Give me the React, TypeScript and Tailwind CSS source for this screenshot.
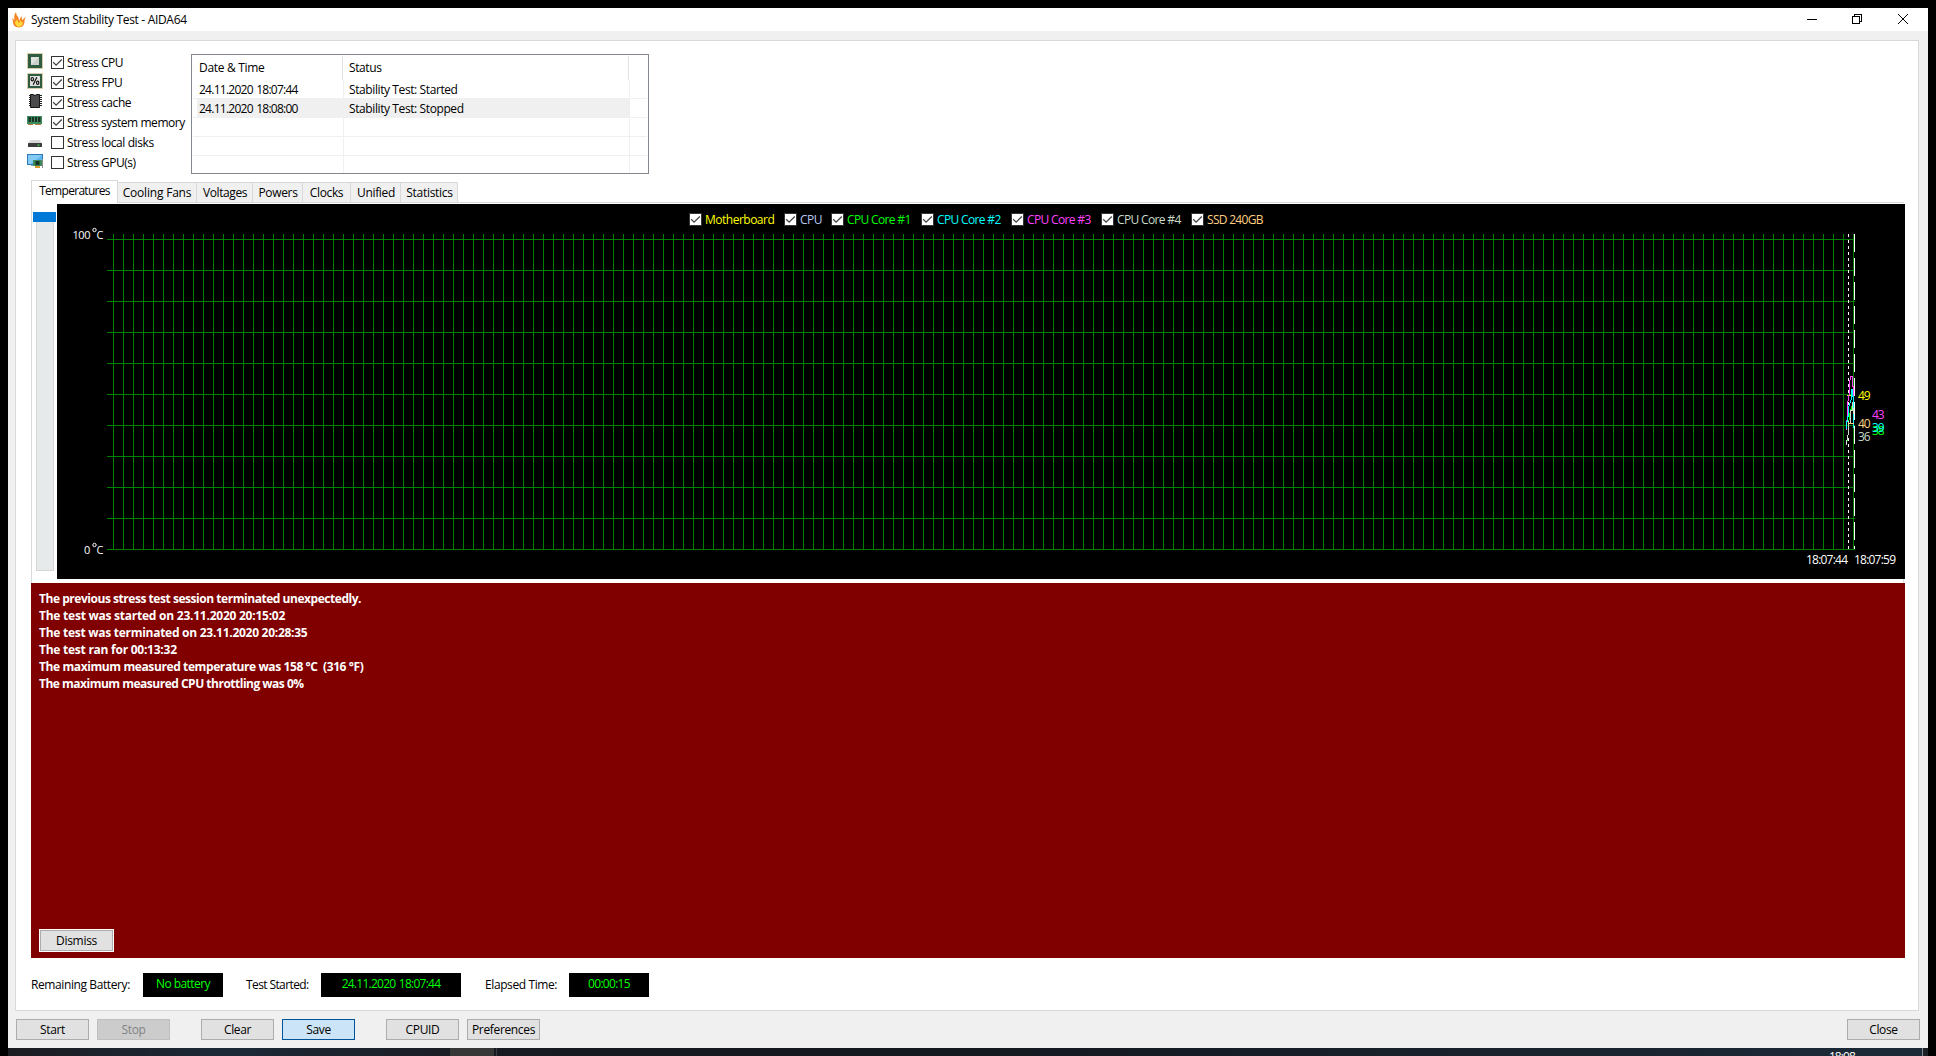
import React from "react";

function Check({ checked, className = "" }: { checked: boolean; className?: string }) {
  return (
    <span className={`block size-[13px] shrink-0 border border-[#333] bg-white ${className}`}>
      {checked && (
        <svg viewBox="0 0 11 11" className="block size-[11px]" fill="none" stroke="#444" strokeWidth="1.3">
          <path d="M1.2 5.3 L4.1 8.2 L9.8 2.5" />
        </svg>
      )}
    </span>
  );
}

function Pins() {
  return <rect x="0.5" y="0.5" width="15" height="15" fill="none" stroke="#b39a54" strokeDasharray="1 1" />;
}

const icons: Record<string, React.ReactNode> = {
  cpu: (
    <>
      <Pins />
      <rect x="1" y="1" width="14" height="14" fill="#2e5b41" />
      <rect x="4" y="4" width="8" height="8" fill="#e0e3e0" />
      <path d="M4 12L12 4V12Z" fill="#cbcfcc" />
    </>
  ),
  fpu: (
    <>
      <Pins />
      <rect x="1" y="1" width="14" height="14" fill="#2e5b41" />
      <rect x="3" y="3" width="10" height="10" fill="#dfe2df" />
      <g fill="none" stroke="#111" strokeWidth="1.2">
        <ellipse cx="5.300" cy="6.200" rx="1.200" ry="1.700" />
        <ellipse cx="10.700" cy="9.800" rx="1.200" ry="1.700" />
        <path d="M9.800 4.200L6.200 11.800" />
      </g>
    </>
  ),
  cache: (
    <>
      <path d="M1.500 2.500H14.500M1.500 4.500H14.500M1.500 6.500H14.500M1.500 8.500H14.500M1.500 10.500H14.500M1.500 12.500H14.500" stroke="#222" shapeRendering="crispEdges" />
      <path d="M3.500 1.500H6Q8 3.500 10 1.500H12.500V14.500H3.500Z" fill="#4a4a4c" stroke="#151515" />
    </>
  ),
  memory: (
    <>
      <path d="M0 3H15V11H0Z" fill="#3d8a5d" />
      <path d="M1.500 4H4V9H1.500ZM5 4H7V9H5ZM8 4H10V9H8ZM11 4H13.500V9H11Z" fill="#1b3427" />
      <path d="M1 11.500H6M8 11.500H14" stroke="#b9793c" />
    </>
  ),
  disk: (
    <>
      <path d="M3.500 7H12.500L15 10.500H1Z" fill="#d7d7d7" />
      <rect x="1" y="10" width="14" height="4" rx="0.500" fill="#3c3c3c" />
      <rect x="10.500" y="11.500" width="2" height="1.200" fill="#41e05a" />
    </>
  ),
  gpu: (
    <>
      <rect x="0.500" y="1.500" width="15" height="10" fill="#5cb6ee" stroke="#2d78b5" />
      <path d="M1 2H15L4 11H1Z" fill="#83cbf5" />
      <rect x="4" y="12" width="4" height="1" fill="#9aa7b0" />
      <path d="M6 7H15V13H6Z" fill="#3f8a5c" />
      <rect x="8.500" y="8" width="4" height="4" fill="#143523" />
      <path d="M8 14H13" stroke="#d99a2b" strokeWidth="2" />
      <path d="M15.500 6V15" stroke="#8d8d8d" />
    </>
  ),
};

const stress = [
  { icon: "cpu", label: "Stress CPU", on: true, t: "tracking-[-0.45px]" },
  { icon: "fpu", label: "Stress FPU", on: true, t: "tracking-[-0.38px]" },
  { icon: "cache", label: "Stress cache", on: true, t: "tracking-[-0.43px]" },
  { icon: "memory", label: "Stress system memory", on: true, t: "tracking-[-0.45px]" },
  { icon: "disk", label: "Stress local disks", on: false, t: "tracking-[-0.4px]" },
  { icon: "gpu", label: "Stress GPU(s)", on: false, t: "tracking-[-0.45px]" },
];

function TitleBar() {
  return (
    <header className="flex h-[23px] shrink-0 items-center bg-white">
      <svg viewBox="0 0 14 16" className="ml-1 h-4 w-[14px]">
        <path d="M0 6Q2 7 3 9Q1 4 4 0Q4 3 6 5Q7 6 7 9Q8 6 10 4Q9.500 7 10.500 8Q12 6 14 5Q12 8 12.500 10Q12 15 7 15.500Q1 15 1 10Q1 8 0 6Z" fill="#f58220" />
        <path d="M3 10Q4 10 5 7Q6 10 7 11Q8 9 9 8Q9 11 11 10Q11 14 7 15Q3 14 3 10Z" fill="#ffd93b" />
      </svg>
      <h1 className="ml-[5px] text-[12px] leading-[15px] tracking-[-0.32px] whitespace-nowrap">System Stability Test - AIDA64</h1>
      <svg viewBox="0 0 110 12" className="mt-[-1px] mr-[18px] ml-auto h-3 w-[110px]" fill="none" stroke="#000" shapeRendering="crispEdges">
        <path d="M7 6.500H17" />
        <path d="M52.500 3.500H59.500V10.500H52.500ZM54.500 3.500V1.500H61.500V8.500H59.500" />
        <path d="M98 1L108 11M108 1L98 11" shapeRendering="auto" />
      </svg>
    </header>
  );
}

const log = [
  ["24.11.2020 18:07:44", "Stability Test: Started"],
  ["24.11.2020 18:08:00", "Stability Test: Stopped"],
  ["", ""],
  ["", ""],
  ["", ""],
];

function EventLog() {
  return (
    <section className="ml-[6px] h-[120px] w-[458px] border border-[#828790] bg-white px-px pt-px text-[12px] leading-[15px] tracking-[-0.4px] whitespace-nowrap">
      <div className="flex h-6">
        <div className="h-6 w-[150px] border-r border-[#e2e2e2] pt-[4px] pl-[6px] tracking-[-0.3px]">Date &amp; Time</div>
        <div className="h-6 w-[286px] border-r border-[#e2e2e2] pt-[4px] pl-[6px]">Status</div>
      </div>
      {log.map(([time, status], i) => (
        <div key={i} className={`flex ${i === 4 ? "h-[17px]" : "h-[19px] border-b border-[#f0f0f0]"}`}>
          <div className={`ml-1 w-[147px] border-r border-[#f0f0f0] pt-[2px] pl-[2px] tracking-[-0.74px] [word-spacing:1px] ${i === 1 ? "bg-[#f0f0f0]" : ""}`}>{time}</div>
          <div className={`w-[286px] border-r border-[#f0f0f0] pt-[2px] pl-[5px] ${i === 1 ? "bg-[#f0f0f0]" : ""}`}>{status}</div>
        </div>
      ))}
    </section>
  );
}

const tabs = [
  ["Cooling Fans", "w-[79px] tracking-[-0.2px]"],
  ["Voltages", "w-[56px] pl-px tracking-[-0.4px]"],
  ["Powers", "w-[50px] pl-px tracking-[-0.35px]"],
  ["Clocks", "w-[48px] tracking-[-0.35px]"],
  ["Unified", "w-[50px] pl-px tracking-[-0.35px]"],
  ["Statistics", "w-[57px] pl-px tracking-[-0.3px]"],
];

function Tabs() {
  return (
    <nav className="flex h-[23px] w-[1873px] items-end text-[12px] leading-[15px] whitespace-nowrap">
      <div className="h-[23px] w-[87px] border-x border-t border-[#d9d9d9] bg-white pt-[2px] text-center tracking-[-0.7px]">Temperatures</div>
      {tabs.map(([label, w]) => (
        <div key={label} className={`h-[21px] border-t border-r border-b border-[#d9d9d9] bg-[#f0f0f0] pt-[2px] text-center ${w}`}>
          {label}
        </div>
      ))}
      <div className="h-px flex-1 bg-[#d9d9d9]" />
    </nav>
  );
}

const sensors = [
  ["Motherboard", "text-[#ffff00]", "w-[95px] tracking-[-0.5px]"],
  ["CPU", "text-[#b8c8f0]", "w-[47px] tracking-[-0.5px]"],
  ["CPU Core #1", "text-[#00ff00]", "w-[90px] tracking-[-0.65px]"],
  ["CPU Core #2", "text-[#00ffff]", "w-[90px] tracking-[-0.65px]"],
  ["CPU Core #3", "text-[#ff40ff]", "w-[90px] tracking-[-0.65px]"],
  ["CPU Core #4", "text-[#c8dcc8]", "w-[90px] tracking-[-0.65px]"],
  ["SSD 240GB", "text-[#ffd080]", "w-[76px] tracking-[-0.7px]"],
];

function Chart() {
  const cols = Array.from({ length: 175 }, (_, i) => 56.5 + i * 10);
  const rows = Array.from({ length: 11 }, (_, i) => 35.5 + i * 31);
  return (
    <div className="h-[375px] w-[1848px] bg-black">
      <div className="flex h-[30px] items-center pt-px pl-[632px] text-[12px] leading-[15px] whitespace-nowrap">
        {sensors.map(([label, color, w]) => (
          <div key={label} className={`flex shrink-0 items-center gap-[3px] ${color} ${w}`}>
            <Check checked />
            {label}
          </div>
        ))}
      </div>
      <svg viewBox="0 30 1848 345" className="block h-[345px] w-[1848px] overflow-visible">
        <g stroke="#008000" fill="none" shapeRendering="crispEdges">
          {cols.map((x) => (
            <path key={x} d={`M${x} 30V345`} />
          ))}
          {rows.map((y) => (
            <path key={y} d={`M50 ${y}H1798`} />
          ))}
        </g>
        <g fill="none" shapeRendering="crispEdges">
          <path d="M1791.500 30V345" stroke="#fff" strokeDasharray="3 3" />
          <path d="M1797.500 30V345" stroke="#fff" strokeDasharray="18 6" />
          <path d="M1790 191.500H1794" stroke="#ffff00" />
          <path d="M1789.500 226V216H1790.500V200L1792.500 188V180L1793.500 172.500H1795.500V182H1796.500V200" stroke="#ff40ff" />
          <path d="M1789.500 225V220L1791.500 210V203L1794.500 195V185H1795.500V192H1796.500V224" stroke="#00ffff" />
          <path d="M1789.500 240L1791.500 228V220L1793.500 205V208L1795.500 200" stroke="#00ff00" />
          <path d="M1789.500 241V238L1791.500 229V217M1793.500 219V206H1795.500V198L1796.500 210" stroke="#c8dcc8" />
          <path d="M1791 219.500H1797" stroke="#ffd080" />
        </g>
        <g fontFamily="Open Sans, Noto Sans, sans-serif" fontSize="12">
          <g fill="#fff">
            <text x="15.500" y="35" fontSize="11" textLength="18">100</text>
            <circle cx="37.500" cy="26" r="1.700" fill="none" stroke="#fff" />
            <text x="39.500" y="35" fontSize="11">C</text>
            <text x="27" y="350" fontSize="11">0</text>
            <circle cx="37.500" cy="341" r="1.700" fill="none" stroke="#fff" />
            <text x="39.500" y="350" fontSize="11">C</text>
            <text x="1749" y="360" textLength="42">18:07:44</text>
            <text x="1797" y="360" textLength="42">18:07:59</text>
          </g>
          <text x="1801" y="196" fill="#ffff00" textLength="12.500">49</text>
          <text x="1815" y="215" fill="#ff40ff" textLength="12.500">43</text>
          <text x="1801" y="224" fill="#ffd080" textLength="12.500">40</text>
          <text x="1815" y="231" fill="#00ff00" textLength="12.500">38</text>
          <text x="1815" y="228" fill="#00ffff" textLength="12.500">39</text>
          <text x="1801" y="237" fill="#c8dcc8" textLength="12.500">36</text>
        </g>
      </svg>
    </div>
  );
}

const messages = [
  ["The previous stress test session terminated unexpectedly.", "tracking-[-0.46px]"],
  ["The test was started on 23.11.2020 20:15:02", "tracking-[-0.24px]"],
  ["The test was terminated on 23.11.2020 20:28:35", "tracking-[-0.27px]"],
  ["The test ran for 00:13:32", "tracking-[-0.25px]"],
  ["The maximum measured temperature was 158 °C\u00a0 (316 °F)", "tracking-[-0.4px]"],
  ["The maximum measured CPU throttling was 0%", "tracking-[-0.5px]"],
];

function Button({ label, tone = "border-[#adadad] bg-[#e1e1e1]", className = "" }: { label: string; tone?: string; className?: string }) {
  return (
    <button className={`flex h-[21px] w-[73px] shrink-0 items-center justify-center border leading-[15px] whitespace-nowrap ${tone} ${className}`}>
      {label}
    </button>
  );
}

function Readout({ label, value, lw, vw }: { label: string; value: string; lw: string; vw: string }) {
  return (
    <>
      <span className={`shrink-0 ${lw}`}>{label}</span>
      <span className={`flex h-[24px] shrink-0 justify-center bg-black pt-[3px] leading-[15px] text-[#00ff00] ${vw}`}>{value}</span>
    </>
  );
}

function Taskbar() {
  return (
    <div className="mx-2 flex h-2 shrink-0 overflow-hidden bg-linear-to-r from-[#191b20] via-[#14181f] to-[#1c2a38]">
      <div className="w-[442px] bg-linear-to-r from-[#1b1c21] via-[#1b2937] to-[#1b1d24]" />
      <div className="w-[44px] bg-[#373737]" />
      <div className="ml-[2px] w-px bg-[#3a3c40]" />
      <div className="ml-auto pt-[1px] text-[12px] leading-[15px] tracking-[-0.9px] text-white">18:08</div>
      <div className="ml-[67px] w-px bg-[#85888c]" />
      <div className="w-[5px] bg-[#1d2024]" />
    </div>
  );
}

export default function App() {
  return (
    <div className="flex h-[1056px] w-[1936px] flex-col overflow-hidden bg-black pt-2 text-black [font-family:'Open_Sans','Noto_Sans',sans-serif]">
      <div className="mx-2 flex h-[1040px] shrink-0 flex-col bg-[#f0f0f0]">
        <TitleBar />
        <main className="mt-[9px] ml-[7px] h-[971px] w-[1904px] shrink-0 border border-[#d9d9d9] bg-white pl-[11px]">
          <div className="flex pt-[13px]">
            <ul className="mt-[-2px] w-[158px] shrink-0">
              {stress.map((s) => (
                <li key={s.icon} className="flex h-5 whitespace-nowrap">
                  <svg viewBox="0 0 16 16" className="mt-px h-4 w-4 shrink-0">
                    {icons[s.icon]}
                  </svg>
                  <Check checked={s.on} className="mt-1 ml-2" />
                  <span className={`mt-[3px] ml-[3px] text-[12px] leading-[15px] ${s.t}`}>{s.label}</span>
                </li>
              ))}
            </ul>
            <EventLog />
          </div>
          <div className="mt-[6px] ml-1 w-[1874px]">
            <Tabs />
            <div className="flex border-l border-[#d9d9d9] pt-px">
              <div className="w-[25px] shrink-0 pt-2 pl-px">
                <div className="h-[10px] w-[23px] bg-[#0078d7]" />
                <div className="ml-[3px] h-[349px] w-[18px] border border-t-0 border-[#d6d6d6] bg-[#e7eaea]" />
              </div>
              <Chart />
            </div>
            <div className="h-1 w-[1873px] border-x border-[#d9d9d9]" />
            <section className="flex h-[375px] flex-col bg-[#800000] pt-[7px] pl-2">
              <div className="text-[12px] leading-[17px] font-bold whitespace-nowrap text-white">
                {messages.map(([text, t]) => (
                  <p key={text} className={t}>
                    {text}
                  </p>
                ))}
              </div>
              <div className="mt-auto mb-[6px] w-[75px] border border-white text-[12px] tracking-[-0.3px]">
                <Button label="Dismiss" />
              </div>
            </section>
            <div className="mt-[15px] flex items-center text-[12px] tracking-[-0.4px] whitespace-nowrap">
              <Readout label="Remaining Battery:" value="No battery" lw="w-[112px]" vw="w-[80px] tracking-[-0.55px]" />
              <Readout label="Test Started:" value="24.11.2020 18:07:44" lw="ml-[23px] w-[75px] tracking-[-0.6px]" vw="w-[140px] tracking-[-0.74px] [word-spacing:1px]" />
              <Readout label="Elapsed Time:" value="00:00:15" lw="ml-[24px] w-[84px]" vw="w-[80px] tracking-[-0.7px]" />
            </div>
          </div>
        </main>
        <footer className="mt-[8px] mr-2 ml-2 flex text-[12px] tracking-[-0.35px]">
          <Button label="Start" />
          <Button label="Stop" tone="border-[#bfbfbf] bg-[#cccccc] text-[#838383]" className="ml-2" />
          <Button label="Clear" className="ml-[31px]" />
          <Button label="Save" tone="border-[#005499] bg-[#cce4f7]" className="ml-2" />
          <Button label="CPUID" className="ml-[31px]" />
          <Button label="Preferences" className="ml-2" />
          <Button label="Close" className="ml-auto" />
        </footer>
      </div>
      <Taskbar />
    </div>
  );
}
